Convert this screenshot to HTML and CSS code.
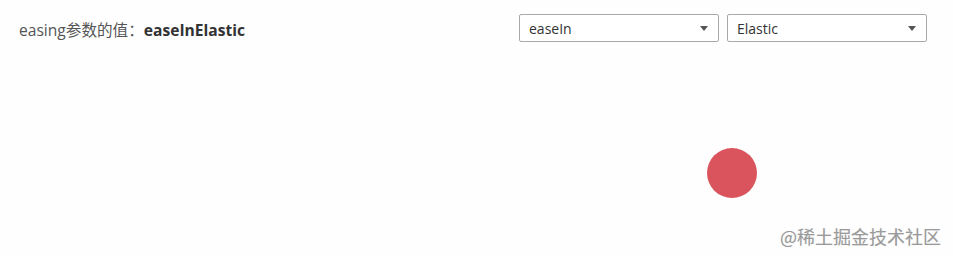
FILE: index.html
```html
<!DOCTYPE html>
<html lang="zh">
<head>
<meta charset="utf-8">
<title>easing</title>
<link rel="stylesheet" href="styles.css">
</head>
<body>
<div class="page">
  <header class="toolbar">
    <div class="label">easing参数的值：<strong class="value">easeInElastic</strong></div>
    <div class="controls">
      <div class="select"><span class="select-text">easeIn</span><span class="caret"></span></div>
      <div class="select"><span class="select-text">Elastic</span><span class="caret"></span></div>
    </div>
  </header>
  <main class="stage">
    <div class="ball" style="left: 707px; top: 106px;"></div>
  </main>
  <div class="watermark">@稀土掘金技术社区</div>
</div>
</body>
</html>
```
FILE: styles.css
```css
* { box-sizing: border-box; }
html, body { margin: 0; padding: 0; background: #fefefe; }
body {
  font-family: "Open Sans", "Noto Sans CJK SC", sans-serif;
  width: 953px;
  height: 256px;
  overflow: hidden;
}
.page {
  position: relative;
  width: 953px;
  height: 256px;
}
.toolbar {
  display: flex;
  justify-content: space-between;
  align-items: center;
  padding: 14px 26px 0 19px;
}
.label {
  font-size: 15.6px;
  color: #555;
  padding-top: 3px;
}
.value {
  color: #333;
  font-weight: 700;
}
.controls {
  display: flex;
  gap: 8px;
}
.select {
  width: 200px;
  height: 28px;
  border: 1px solid #a9a9a9;
  border-radius: 2px;
  background: #fff;
  display: flex;
  align-items: center;
  justify-content: space-between;
  padding: 0 10px 0 9px;
  font-size: 14px;
  color: #333;
}
.caret {
  width: 0;
  height: 0;
  border-left: 4px solid transparent;
  border-right: 4px solid transparent;
  border-top: 5px solid #555;
}
.stage {
  position: relative;
  height: 200px;
}
.ball {
  position: absolute;
  width: 50px;
  height: 50px;
  border-radius: 50%;
  background: #d9545d;
}
.watermark {
  position: absolute;
  right: 12px;
  top: 222px;
  font-family: "Noto Sans CJK SC", sans-serif;
  font-size: 18px;
  line-height: 28px;
  color: #9a9a9a;
  text-shadow: 0 0 1px #ddd;
}
```
